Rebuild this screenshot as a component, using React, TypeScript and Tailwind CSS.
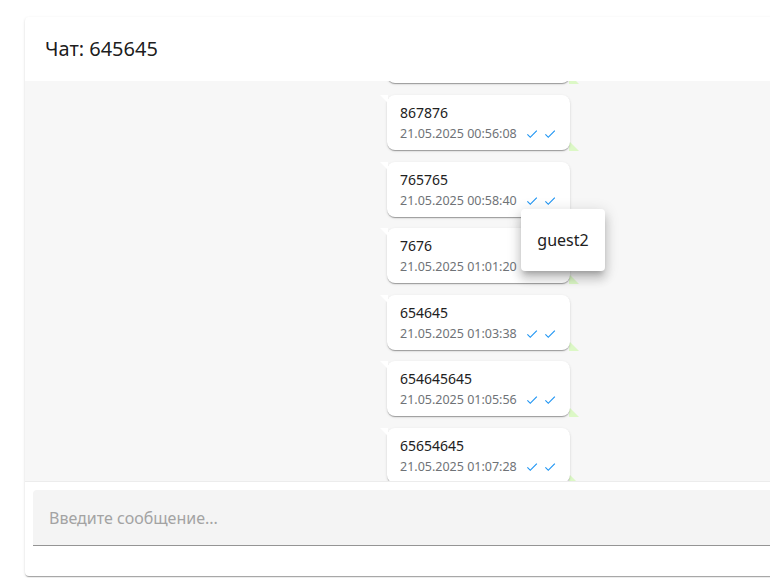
import React from "react";

type Msg = { text: string; time: string };

const messages: Msg[] = [
  { text: "645645", time: "21.05.2025 00:54:12" },
  { text: "867876", time: "21.05.2025 00:56:08" },
  { text: "765765", time: "21.05.2025 00:58:40" },
  { text: "7676", time: "21.05.2025 01:01:20" },
  { text: "654645", time: "21.05.2025 01:03:38" },
  { text: "654645645", time: "21.05.2025 01:05:56" },
  { text: "65654645", time: "21.05.2025 01:07:28" },
];

function Check() {
  return (
    <svg width="14" height="14" viewBox="0 0 24 24" className="fill-[#2196f3]">
      <path d="M9 16.2 4.8 12l-1.4 1.4L9 19 21 7l-1.4-1.4L9 16.2z" />
    </svg>
  );
}

function Bubble({ msg }: { msg: Msg }) {
  return (
    <div className="relative w-[183px] h-[55px] shrink-0">
      {/* green tail under the bubble */}
      <svg
        width="10"
        height="10"
        viewBox="0 0 10 10"
        className="absolute right-[-9px] bottom-[-1px]"
      >
        <polygon points="0,0 0,10 10,10" fill="#dcf8c6" />
      </svg>
      <div className="relative h-full rounded-lg bg-white px-[13px] pt-[7px] shadow-[0_2px_1px_-1px_rgba(0,0,0,0.2),0_1px_1px_0_rgba(0,0,0,0.14),0_1px_3px_0_rgba(0,0,0,0.12)]">
        <div className="text-[14px] leading-[21px] text-[#212121]">{msg.text}</div>
        <div className="mt-[2px] flex h-[18px] items-center">
          <span className="text-[12.5px] leading-[18px] text-[#6f7377]">{msg.time}</span>
          <span className="ml-[8px] flex items-center gap-[4px]">
            <Check />
            <Check />
          </span>
        </div>
      </div>
      <svg
        width="8"
        height="8"
        viewBox="0 0 8 8"
        className="absolute left-[-7px] top-0"
      >
        <polygon points="0,0 8,0 8,8" fill="#ffffff" />
      </svg>
    </div>
  );
}

export default function App() {
  return (
    <div
      className="relative h-[578px] w-[770px] overflow-hidden bg-white"
      style={{ fontFamily: '"Noto Sans", "Open Sans", sans-serif' }}
    >
      <div className="ml-[25px] mt-[17px] flex h-[559px] w-[907px] flex-col overflow-hidden rounded bg-white shadow-[0_2px_1px_-1px_rgba(0,0,0,0.2),0_1px_1px_0_rgba(0,0,0,0.14),0_1px_3px_0_rgba(0,0,0,0.12)]">
        {/* Header */}
        <div className="flex h-[64px] shrink-0 items-center pl-[20px] text-[20px] text-black/90">
          Чат: 645645
        </div>

        {/* Messages */}
        <div className="h-[400px] shrink-0 overflow-hidden bg-[#f7f7f7]">
          <div className="mt-[-52.6px] flex flex-col items-center gap-[11.6px]">
            {messages.map((m, i) => (
              <Bubble key={i} msg={m} />
            ))}
          </div>
        </div>

        {/* Input */}
        <div className="flex-1 border-t border-[#ececec] px-[8px] pt-[8px]">
          <div className="flex h-[56px] items-center rounded-t bg-[#f4f4f4] border-b border-[#949494] px-[16px]">
            <input
              className="w-full bg-transparent text-[16px] text-[#212121] outline-none placeholder:text-[#a3a3a3]"
              placeholder="Введите сообщение..."
            />
          </div>
        </div>
      </div>

      {/* Tooltip */}
      <div className="absolute left-[521px] top-[209px] flex h-[62px] w-[84px] items-center justify-center rounded bg-white text-[16px] text-[#212121] shadow-[0_5px_5px_-3px_rgba(0,0,0,0.2),0_8px_10px_1px_rgba(0,0,0,0.14),0_3px_14px_2px_rgba(0,0,0,0.12)]">
        guest2
      </div>
    </div>
  );
}
